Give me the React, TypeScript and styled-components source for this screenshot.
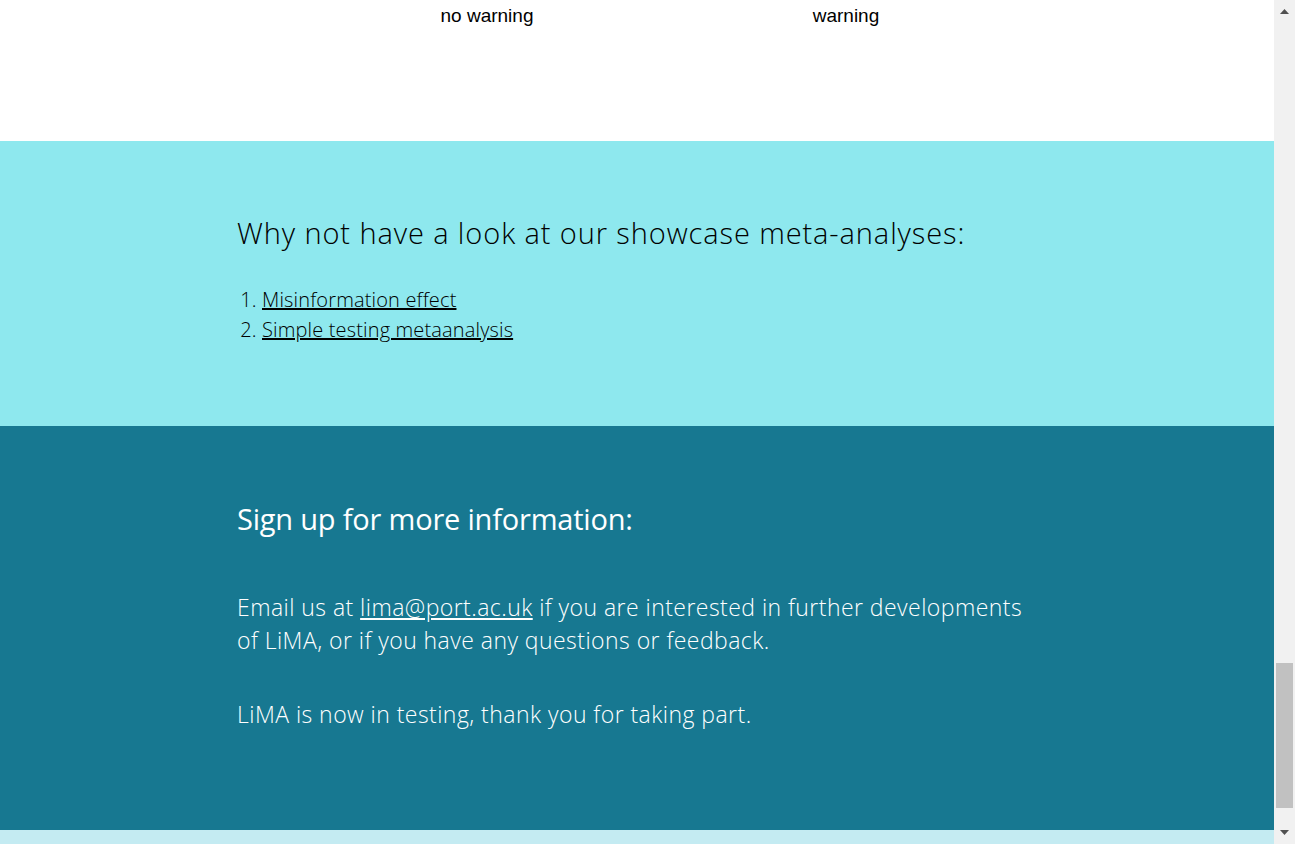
import React from "react";
import styled, { createGlobalStyle } from "styled-components";

const Global = createGlobalStyle`
  html, body { margin: 0; padding: 0; height: 100%; overflow: hidden; background: #fff; }
  #root { height: 100%; }
  * { box-sizing: border-box; }
`;

const Page = styled.div`
  display: flex;
  height: 844px;
  width: 100%;
`;

const Main = styled.main`
  flex: 1;
  display: flex;
  flex-direction: column;
  min-width: 0;
  font-family: "Open Sans", "Liberation Sans", sans-serif;
`;

const Container = styled.div`
  width: 800px;
  margin: 0 auto;
`;

const ChartTail = styled.section`
  height: 141px;
  flex: none;
  background: #fff;
`;

const AxisLabels = styled.div`
  display: grid;
  grid-template-columns: 500px 218px;
  padding-top: 5px;
`;

const AxisLabel = styled.span`
  text-align: center;
  font-family: "Liberation Sans", Arial, sans-serif;
  font-size: 19px;
  line-height: 22px;
  color: #000;
`;

const Showcase = styled.section`
  background: #8ee8ee;
  padding: 75px 0 81px;
  color: #000;
  flex: none;
`;

const ShowcaseTitle = styled.h3`
  margin: 0;
  font-size: 29px;
  font-weight: 300;
  line-height: 34px;
  letter-spacing: 0.9px;
`;

const ShowcaseList = styled.ol`
  margin: 35px 0 0;
  padding-left: 25px;
  font-size: 20px;
  font-weight: 300;
  line-height: 30px;
  letter-spacing: 0.15px;
`;

const ShowcaseLink = styled.a`
  color: #000;
  text-decoration: underline;
`;

const SignUp = styled.section`
  background: #177891;
  padding: 74px 0 99px;
  color: #fff;
  flex: none;
`;

const SignUpTitle = styled.h2`
  margin: 0;
  font-size: 29px;
  font-weight: 400;
  line-height: 38px;
  letter-spacing: -0.2px;
`;

const Paragraph = styled.p<{ $gap: number }>`
  margin: ${(p) => p.$gap}px 0 0;
  font-size: 23px;
  font-weight: 300;
  line-height: 33px;
  letter-spacing: 0.45px;
`;

const MailLink = styled.a`
  color: #fff;
  text-decoration: underline;
`;

const FooterStrip = styled.footer`
  flex: 1;
  background: #c4ebf2;
`;

const Scrollbar = styled.aside`
  width: 21px;
  flex: none;
  background: #f1f1f1;
  display: flex;
  flex-direction: column;
`;

const ArrowButton = styled.div`
  height: 23px;
  display: flex;
  align-items: center;
  justify-content: center;
  flex: none;
`;

const Track = styled.div`
  flex: 1;
  display: flex;
  flex-direction: column;
  padding: 0 2px;
`;

const Thumb = styled.div<{ $top: number; $height: number }>`
  margin-top: ${(p) => p.$top}px;
  height: ${(p) => p.$height}px;
  background: #c1c1c1;
`;

const Arrow = ({ up }: { up?: boolean }) => (
  <svg width="9" height="5" viewBox="0 0 9 5">
    <polygon points={up ? "4.5,0 9,5 0,5" : "0,0 9,0 4.5,5"} fill="#505050" />
  </svg>
);

export default function App() {
  return (
    <>
      <Global />
      <Page>
        <Main>
          <ChartTail>
            <Container>
              <AxisLabels>
                <AxisLabel>no warning</AxisLabel>
                <AxisLabel>warning</AxisLabel>
              </AxisLabels>
            </Container>
          </ChartTail>
          <Showcase>
            <Container>
              <ShowcaseTitle>Why not have a look at our showcase meta-analyses:</ShowcaseTitle>
              <ShowcaseList>
                <li>
                  <ShowcaseLink href="#">Misinformation effect</ShowcaseLink>
                </li>
                <li>
                  <ShowcaseLink href="#">Simple testing metaanalysis</ShowcaseLink>
                </li>
              </ShowcaseList>
            </Container>
          </Showcase>
          <SignUp>
            <Container>
              <SignUpTitle>Sign up for more information:</SignUpTitle>
              <Paragraph $gap={53}>
                Email us at <MailLink href="#">lima@port.ac.uk</MailLink> if you are interested in further
                developments of LiMA, or if you have any questions or feedback.
              </Paragraph>
              <Paragraph $gap={41}>LiMA is now in testing, thank you for taking part.</Paragraph>
            </Container>
          </SignUp>
          <FooterStrip />
        </Main>
        <Scrollbar>
          <ArrowButton>
            <Arrow up />
          </ArrowButton>
          <Track>
            <Thumb $top={640} $height={145} />
          </Track>
          <ArrowButton>
            <Arrow />
          </ArrowButton>
        </Scrollbar>
      </Page>
    </>
  );
}
